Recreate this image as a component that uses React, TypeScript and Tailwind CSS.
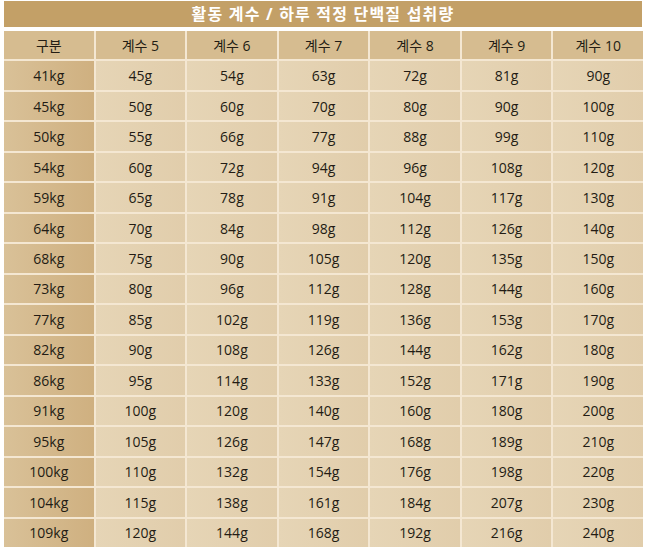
import React from "react";

const weights = [41, 45, 50, 54, 59, 64, 68, 73, 77, 82, 86, 91, 95, 100, 104, 109];
const factors = [5, 6, 7, 8, 9, 10];
const values: number[][] = [
  [45, 54, 63, 72, 81, 90],
  [50, 60, 70, 80, 90, 100],
  [55, 66, 77, 88, 99, 110],
  [60, 72, 94, 96, 108, 120],
  [65, 78, 91, 104, 117, 130],
  [70, 84, 98, 112, 126, 140],
  [75, 90, 105, 120, 135, 150],
  [80, 96, 112, 128, 144, 160],
  [85, 102, 119, 136, 153, 170],
  [90, 108, 126, 144, 162, 180],
  [95, 114, 133, 152, 171, 190],
  [100, 120, 140, 160, 180, 200],
  [105, 126, 147, 168, 189, 210],
  [110, 132, 154, 176, 198, 220],
  [115, 138, 161, 184, 207, 230],
  [120, 144, 168, 192, 216, 240],
];

export default function App() {
  return (
    <div
      className="w-[648px] h-[553px] bg-white pl-[4px] pt-[1px]"
      style={{ fontFamily: '"Open Sans", "Noto Sans CJK KR", sans-serif' }}
    >
      <div className="w-[638px] h-[26px] bg-[#c3a067] flex items-center justify-center text-white font-bold text-[16px] tracking-[1.2px]">
        활동 계수 / 하루 적정 단백질 섭취량
      </div>
      <div className="mt-[4px] w-[639px] h-[516px] bg-[#f4e7d2] grid grid-cols-7 grid-rows-17 gap-[2px] text-[14px] text-[#231c14]">
        <div className="bg-[#d6bc90] flex items-center justify-center">구분</div>
        {factors.map((f) => (
          <div key={f} className="bg-[#d6bc90] flex items-center justify-center">
            계수 {f}
          </div>
        ))}
        {weights.map((w, i) => (
          <React.Fragment key={w}>
            <div className="bg-linear-to-r from-[#d9c198] to-[#cfb080] flex items-center justify-center">
              {w}kg
            </div>
            {values[i].map((v, j) => (
              <div
                key={j}
                className="bg-linear-to-r from-[#e6d5b6] to-[#e1cdab] flex items-center justify-center"
              >
                {v}g
              </div>
            ))}
          </React.Fragment>
        ))}
      </div>
    </div>
  );
}
